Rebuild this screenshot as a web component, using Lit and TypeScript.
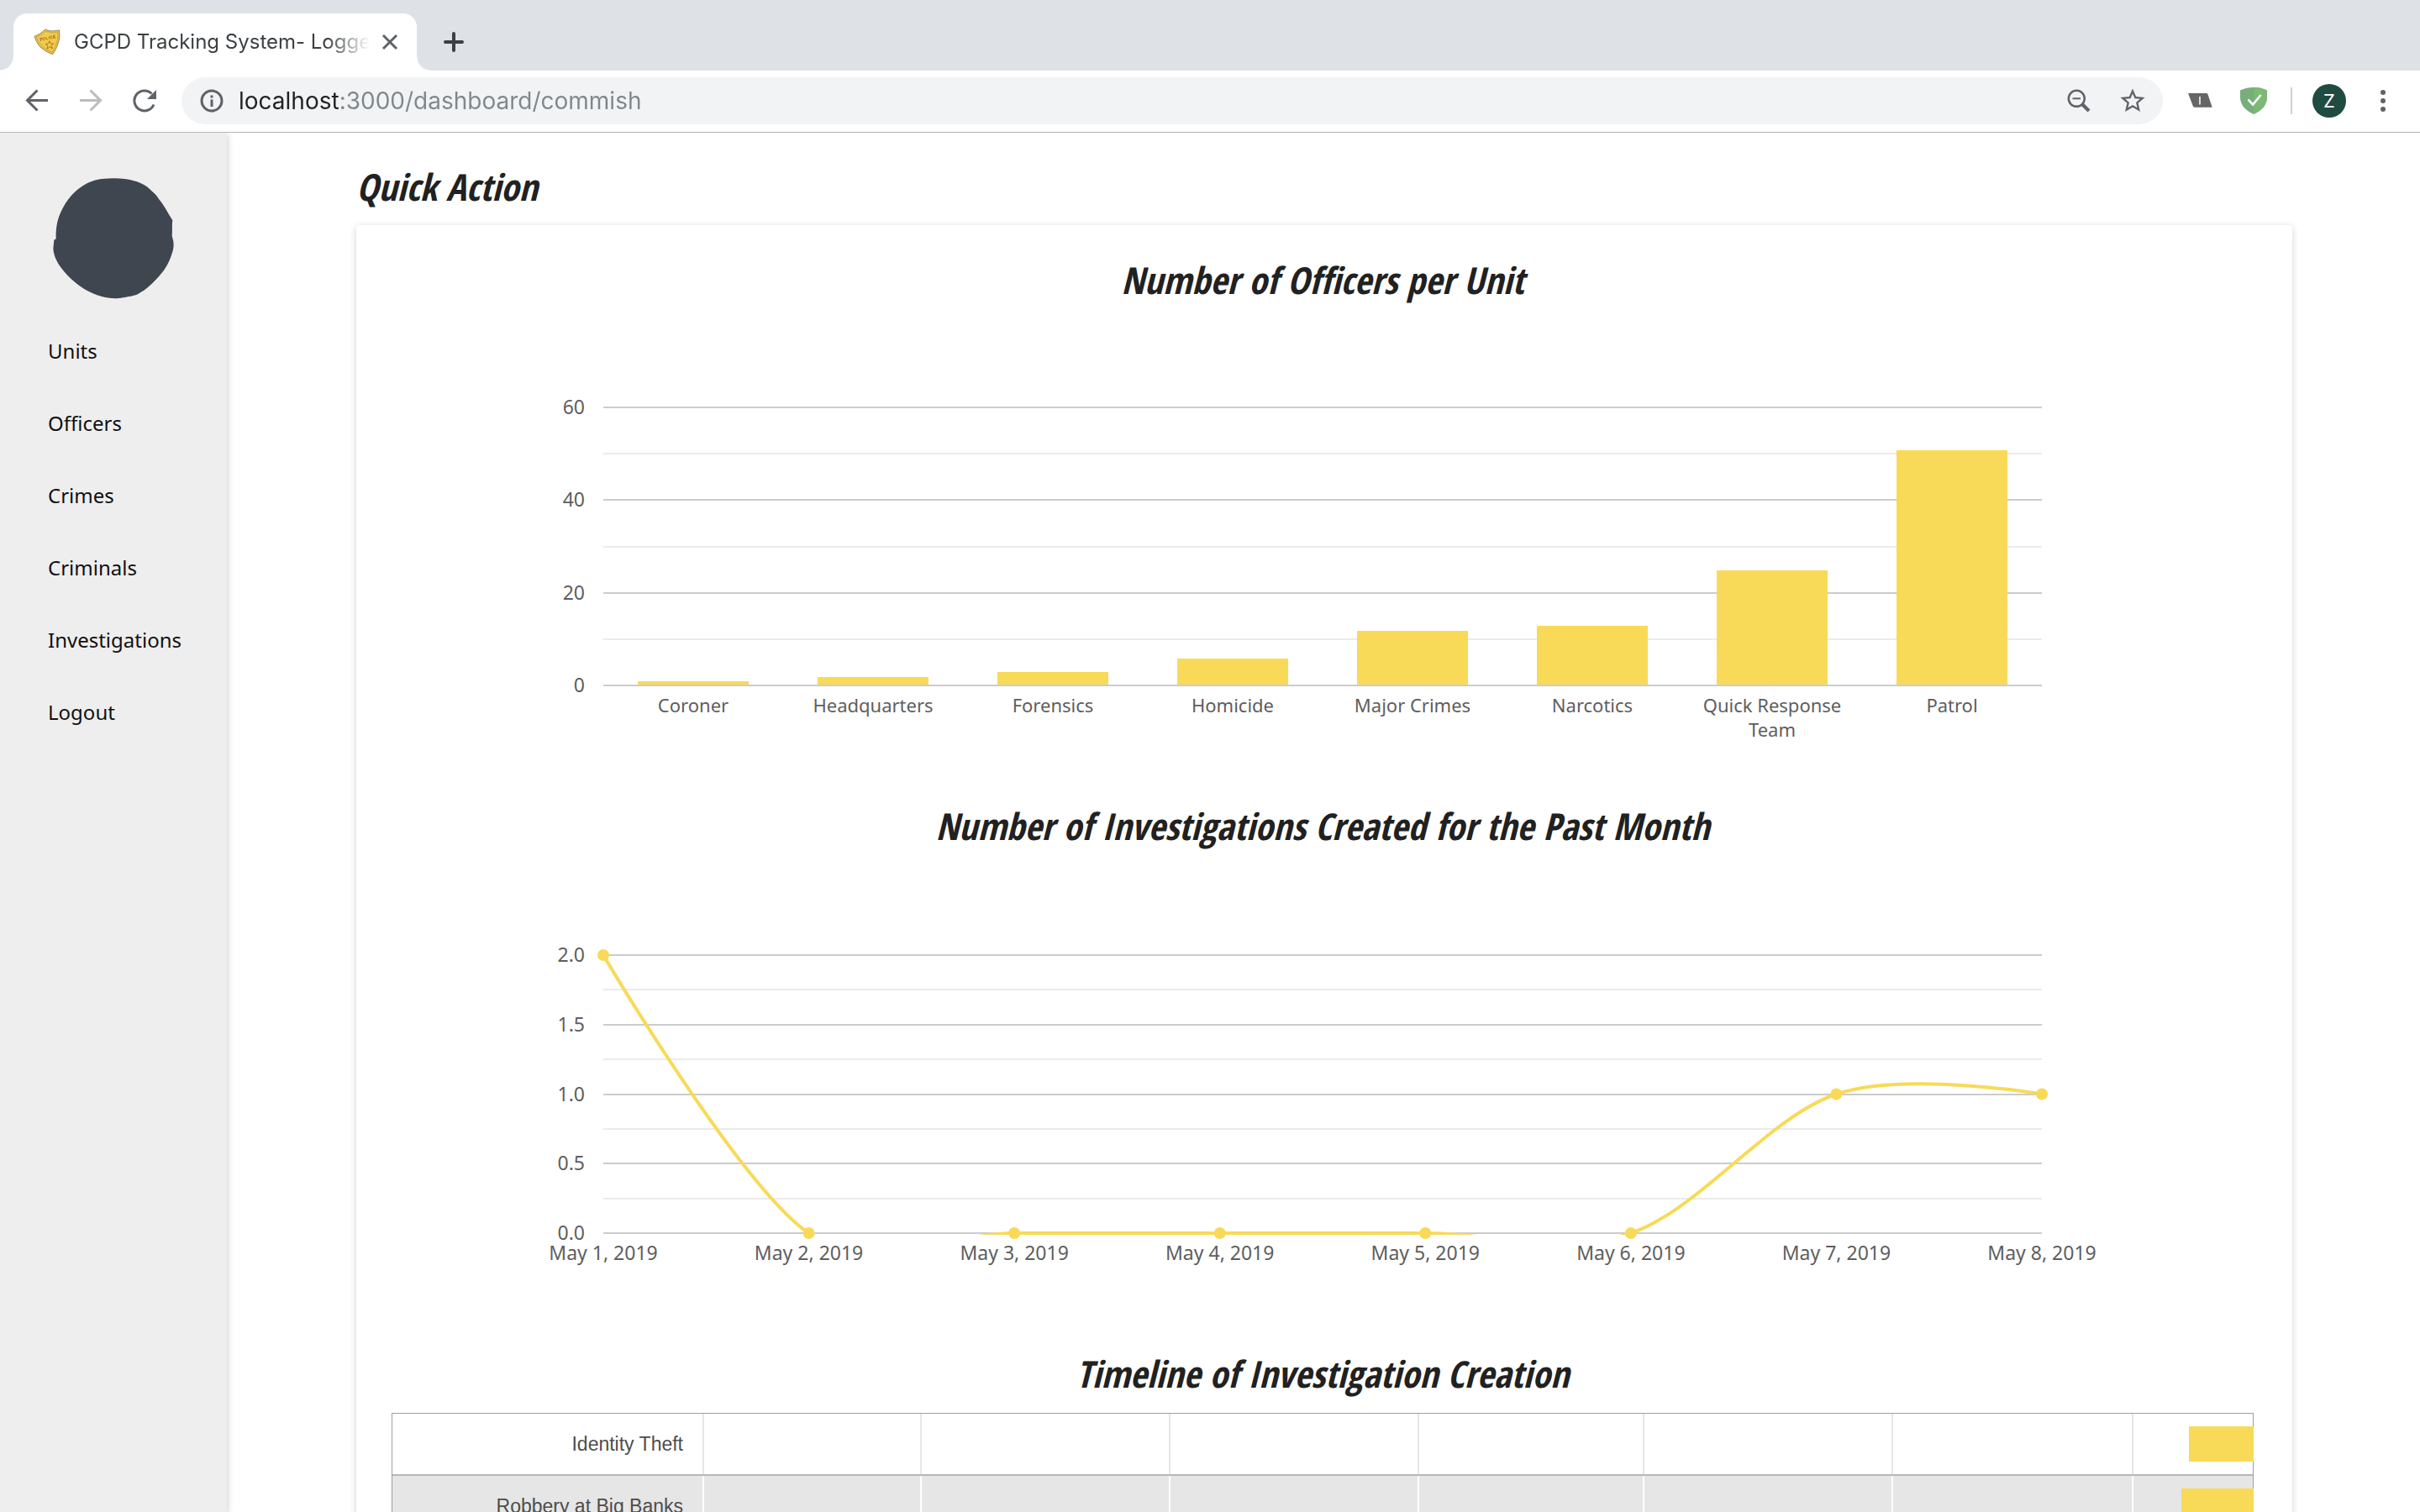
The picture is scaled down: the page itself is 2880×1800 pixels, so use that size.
import { LitElement, html, svg, css } from "lit";
import { customElement, property } from "lit/decorators.js";

const range = (n: number) => Array.from({ length: n }, (_, i) => i);

/* ---------- Browser frame ---------- */

@customElement("browser-bar")
export class BrowserBar extends LitElement {
  @property() tabTitle = "";
  @property() url = "";

  static styles = css`
    :host {
      display: block;
      font-family: Inter, "Liberation Sans", sans-serif;
    }
    button {
      border: 0;
      padding: 0;
      background: none;
      display: flex;
      align-items: center;
      justify-content: center;
      width: 32px;
      height: 32px;
      flex: none;
      color: #5f6368;
      font: inherit;
    }
    svg {
      display: block;
      width: 32px;
      height: 32px;
      fill: none;
      stroke: currentColor;
    }
    .tabs {
      display: flex;
      align-items: flex-end;
      height: 84px;
      padding-left: 16px;
      background: #dee1e6;
    }
    .tab {
      position: relative;
      box-sizing: border-box;
      display: flex;
      align-items: center;
      width: 480px;
      height: 68px;
      padding: 0 16px 0 24px;
      border-radius: 16px 16px 0 0;
      background: #fff;
    }
    .tab::before,
    .tab::after {
      content: "";
      position: absolute;
      bottom: 0;
      width: 16px;
      height: 16px;
    }
    .tab::before {
      left: -16px;
      background: radial-gradient(circle at 0 0, transparent 15px, #fff 16px);
    }
    .tab::after {
      right: -16px;
      background: radial-gradient(circle at 100% 0, transparent 15px, #fff 16px);
    }
    .tab-title {
      flex: 1;
      min-width: 0;
      margin: 0 4px 0 16px;
      white-space: nowrap;
      font-size: 24px;
      line-height: 32px;
      color: #3c4043;
      mask-image: linear-gradient(to left, transparent 4px, #000 56px);
    }
    .new-tab {
      margin: 0 0 18px 28px;
      color: #3c4043;
    }
    .toolbar {
      display: flex;
      align-items: center;
      padding: 8px 28px 9px;
      background: #fff;
      border-bottom: 1px solid #b4b5b6;
    }
    .nav {
      display: flex;
      gap: 32px;
      margin-right: 28px;
    }
    .forward {
      color: #babcbe;
    }
    .omnibox {
      flex: 1;
      display: flex;
      align-items: center;
      height: 56px;
      box-sizing: border-box;
      padding: 0 20px;
      border-radius: 28px;
      background: #f1f3f4;
    }
    .omnibox input {
      flex: 1;
      min-width: 0;
      height: 40px;
      margin: 0 16px;
      padding: 0;
      border: 0;
      outline: 0;
      font: 28px Inter, "Liberation Sans", sans-serif;
      color: #80868b;
      background: linear-gradient(to right, #202124 121px, #80868b 121px) text;
      -webkit-text-fill-color: transparent;
    }
    .star {
      margin-left: 32px;
    }
    .extensions {
      display: flex;
      gap: 32px;
      margin: 0 28px;
    }
    .divider {
      width: 2px;
      height: 32px;
      background: #cfd1d3;
    }
    .profile {
      width: 40px;
      height: 40px;
      margin: 0 28px 0 24px;
      border-radius: 50%;
      background: #1f4b40;
      color: #fff;
      font-size: 22px;
    }
  `;

  render() {
    return html`
      <div class="tabs">
        <div class="tab">
          <svg viewBox="118 70 100 100">
            <path d="M121 99 Q142 92 162 73 Q174 81 188 79 Q202 79 213 76 Q216 94 213 112 Q206 142 189 166 Q160 156 142 138 Q127 120 121 99Z" fill="#f3c94c" stroke="#8f7f55" stroke-width="3" />
            <path d="M128 102 Q146 96 162 80 Q186 88 208 83 Q210 100 207 112 Q201 138 187 158 Q162 149 147 134 Q134 119 128 102Z" stroke="#b39334" stroke-width="2" />
            <path d="M177 116 L181 126 L192 126 L184 133 L188 144 L178 138 L168 146 L171 134 L162 128 L173 126Z" stroke="#8f6f1e" stroke-width="2.500" />
            <path d="M145 117 L142 106 Q150 102 149 109 L144 111 M155 103 a4 5 0 1 0 1 0 M164 101 L166 111 L171 110 M175 99 L177 109 M187 99 Q179 96 180 104 Q183 110 189 105 M198 95 L191 96 L193 106 L200 104 M192 101 H198" stroke="#8f6f1e" stroke-width="2.500" />
          </svg>
          <span class="tab-title">${this.tabTitle}</span>
          <button aria-label="Close tab">
            <svg viewBox="0 0 32 32" stroke-width="3"><path d="M8 8 24 24 M24 8 8 24" /></svg>
          </button>
        </div>
        <button class="new-tab" aria-label="New tab">
          <svg viewBox="0 0 32 32" stroke-width="4" stroke-linecap="round"><path d="M16 6V26 M6 16H26" /></svg>
        </button>
      </div>
      <div class="toolbar">
        <div class="nav">
          <button aria-label="Back">
            <svg viewBox="0 0 32 32" stroke-width="3"><path d="M29 15.5H5 M16.5 3.5 4.5 15.5 16.5 27.5" /></svg>
          </button>
          <button class="forward" aria-label="Forward">
            <svg viewBox="0 0 32 32" stroke-width="3"><path d="M3 15.5H27 M15.5 3.5 27.5 15.5 15.5 27.5" /></svg>
          </button>
          <button aria-label="Reload">
            <svg viewBox="0 0 32 32" stroke-width="3">
              <path d="M27 20.5A12 12 0 1 1 24.5 7.5" />
              <path d="M30 3V14H19Z" fill="currentColor" stroke="none" />
            </svg>
          </button>
        </div>
        <div class="omnibox">
          <button aria-label="Site information">
            <svg viewBox="0 0 32 32" stroke-width="3">
              <circle cx="16" cy="16" r="12" />
              <path d="M16 14.5V23 M16 9.5V12.5" />
            </svg>
          </button>
          <input type="text" aria-label="Address" spellcheck="false" .value=${this.url} />
          <button aria-label="Zoom">
            <svg viewBox="0 0 32 32" stroke-width="2.5">
              <circle cx="13.3" cy="13.3" r="9.5" />
              <path d="M8.5 13.3H18" stroke-width="2" />
              <path d="M20 20 28 28" stroke-width="4" />
            </svg>
          </button>
          <button class="star" aria-label="Bookmark this page">
            <svg viewBox="1 1 22 22">
              <path stroke="none" fill="currentColor" d="M22 9.24l-7.19-.62L12 2 9.19 8.63 2 9.24l5.46 4.73L5.82 21 12 17.27 18.18 21l-1.63-7.03L22 9.24zM12 15.4l-3.76 2.27 1-4.28-3.32-2.88 4.38-.38L12 6.1l1.71 4.04 4.38.38-3.32 2.88 1 4.28L12 15.4z" />
            </svg>
          </button>
        </div>
        <div class="extensions">
          <button aria-label="Extension">
            <svg viewBox="0 0 32 32">
              <path d="M2 7H23.5Q25 7 25.5 8.3L30.7 23.7H9.8Q8.3 23.7 7.8 22.3Z" fill="#666" stroke="none" />
              <path d="M16 11V20.5" stroke="#dcdcdc" stroke-width="2" />
            </svg>
          </button>
          <button aria-label="Ad blocker">
            <svg viewBox="0 0 32 32">
              <path d="M16 0C21 0 27 1 32 3.5V12C32 21 25 28 16 32C7 28 0 21 0 12V3.5C5 1 11 0 16 0Z" fill="#77ae7b" stroke="none" />
              <path d="M16 0C21 0 27 1 32 3.5V12C32 21 25 28 16 32Z" fill="#7cb974" stroke="none" />
              <path d="M9.5 14.5 15 20.5 24.7 9" stroke="#fff" stroke-width="2.6" />
            </svg>
          </button>
        </div>
        <div class="divider"></div>
        <button class="profile" aria-label="Profile">Z</button>
        <button aria-label="Menu">
          <svg viewBox="0 0 32 32">
            ${[6, 16, 26].map((y) => svg`<circle cx="16" cy=${y} r="3" fill="currentColor" stroke="none" />`)}
          </svg>
        </button>
      </div>
    `;
  }
}

/* ---------- Charts ---------- */

const chartStyles = css`
  :host {
    display: block;
  }
  svg {
    display: block;
    width: 100%;
    height: auto;
  }
  text {
    font-family: "Noto Sans", "Open Sans", sans-serif;
    font-size: 22px;
    fill: #5e5e5e;
  }
  .tick,
  .date {
    font-size: 23px;
  }
  .tick {
    text-anchor: end;
  }
  .label,
  .date {
    text-anchor: middle;
  }
  .major {
    fill: #ccc;
  }
  .minor {
    fill: #ebebeb;
  }
  .mark {
    fill: #f8da58;
  }
  .curve {
    fill: none;
    stroke: #f8da58;
    stroke-width: 4;
  }
`;

const PLOT = { left: 252, width: 1712 };

const gridline = (y: number, kind: string) =>
  svg`<rect class=${kind} x=${PLOT.left} y=${Math.round(y) - 1} width=${PLOT.width} height="2" />`;

@customElement("bar-chart")
export class BarChart extends LitElement {
  @property({ attribute: false }) items: { name: string[]; count: number }[] = [];

  static styles = chartStyles;

  render() {
    const base = 453;
    const unit = 331 / 60;
    const slot = PLOT.width / this.items.length;
    const y = (v: number) => base - v * unit;
    return html`
      <svg viewBox="0 0 2216 590" role="img" aria-label="Number of officers per unit">
        ${[10, 30, 50].map((v) => gridline(y(v), "minor"))}
        ${[20, 40, 60].map((v) => gridline(y(v), "major"))}
        ${[0, 20, 40, 60].map(
          (v) => svg`<text class="tick" x="230" y=${Math.round(y(v)) + 8}>${v}</text>`
        )}
        ${this.items.map((d, i) => {
          const centre = PLOT.left + slot * (i + 0.5);
          const top = Math.round(y(d.count)) + 1;
          return svg`
            <rect class="mark" x=${Math.round(centre - 66)} y=${top} width="132" height=${base - top} />
            ${d.name.map((line, n) => svg`<text class="label" x=${centre} y=${485 + n * 29}>${line}</text>`)}
          `;
        })}
        ${gridline(base, "major")}
      </svg>
    `;
  }
}

@customElement("line-chart")
export class LineChart extends LitElement {
  @property({ attribute: false }) items: { date: string; count: number }[] = [];

  static styles = chartStyles;

  render() {
    const base = 455;
    const unit = 331 / 2;
    const y = (v: number) => base - v * unit;
    const step = PLOT.width / Math.max(1, this.items.length - 1);
    const pts = this.items.map((d, i) => [PLOT.left + i * step, y(d.count)]);
    const last = pts.length - 1;
    const slope = (i: number) =>
      i === 0 || i === last
        ? [0, 0]
        : [(pts[i + 1][0] - pts[i - 1][0]) / 6, (pts[i + 1][1] - pts[i - 1][1]) / 6];
    const path = pts
      .map((p, i) => {
        if (i === 0) return `M${p[0]} ${p[1]}`;
        const a = pts[i - 1];
        const sa = slope(i - 1);
        const sp = slope(i);
        return `C${a[0] + sa[0]} ${a[1] + sa[1]} ${p[0] - sp[0]} ${p[1] - sp[1]} ${p[0]} ${p[1]}`;
      })
      .join("");
    return html`
      <svg viewBox="0 0 2216 592" role="img" aria-label="Number of investigations created for the past month">
        <defs>
          <clipPath id="plot"><rect x=${PLOT.left} y="110" width=${PLOT.width} height="347" /></clipPath>
        </defs>
        ${[0.25, 0.75, 1.25, 1.75].map((v) => gridline(y(v), "minor"))}
        ${[0, 0.5, 1, 1.5, 2].map(
          (v) => svg`
            ${gridline(y(v), "major")}
            <text class="tick" x="230" y=${Math.round(y(v)) + 8}>${v.toFixed(1)}</text>
          `
        )}
        <path class="curve" clip-path="url(#plot)" d=${path} />
        ${pts.map((p) => svg`<circle class="mark" cx=${p[0]} cy=${p[1]} r="7" />`)}
        ${this.items.map((d, i) => svg`<text class="date" x=${pts[i][0]} y="487">${d.date}</text>`)}
      </svg>
    `;
  }
}

@customElement("timeline-chart")
export class TimelineChart extends LitElement {
  @property({ attribute: false }) rows: { name: string; start: number }[] = [];

  static styles = [
    chartStyles,
    css`
      .row-label {
        font-family: "Liberation Sans", Arial, sans-serif;
        font-size: 23px;
        fill: #4d4d4d;
        text-anchor: end;
      }
      .band {
        fill: #e6e6e6;
      }
      .column {
        fill: #e6e6e6;
      }
      .column.on-band {
        fill: #fff;
      }
      .rule {
        fill: #b7b7b7;
      }
      .frame {
        fill: none;
        stroke: #9e9e9e;
        stroke-width: 1;
        shape-rendering: crispEdges;
      }
    `,
  ];

  render() {
    const top = 17;
    const pitch = 74;
    const right = 2216;
    const columns = [370, 629, 925, 1221, 1489, 1785, 2071];
    const bottom = top + pitch * this.rows.length;
    return html`
      <svg viewBox="0 0 2216 ${bottom + 20}" role="img" aria-label="Timeline of investigation creation">
        ${this.rows.map((row, i) => {
          const y = top + i * pitch;
          const odd = i % 2 === 1;
          return svg`
            ${odd ? svg`<rect class="band" x="0" y=${y} width=${right} height=${pitch} />` : ""}
            ${columns.map(
              (x) => svg`<rect class=${odd ? "column on-band" : "column"} x=${x} y=${y} width="2" height=${pitch} />`
            )}
            ${i > 0 ? svg`<rect class="rule" x="0" y=${y - 1} width=${right} height="2" />` : ""}
            <text class="row-label" x="347" y=${y + 45}>${row.name}</text>
          `;
        })}
        <rect class="frame" x="0.5" y=${top + 0.5} width=${right - 1} height=${bottom - top - 1} />
        ${this.rows.map(
          (row, i) =>
            svg`<rect class="mark" x=${row.start} y=${top + i * pitch + 16} width=${right - row.start} height="42" />`
        )}
      </svg>
    `;
  }
}

/* ---------- Page ---------- */

@customElement("app-root")
export class AppRoot extends LitElement {
  private links = ["Units", "Officers", "Crimes", "Criminals", "Investigations", "Logout"];

  private units = [
    { name: ["Coroner"], count: 1 },
    { name: ["Headquarters"], count: 2 },
    { name: ["Forensics"], count: 3 },
    { name: ["Homicide"], count: 6 },
    { name: ["Major Crimes"], count: 12 },
    { name: ["Narcotics"], count: 13 },
    { name: ["Quick Response", "Team"], count: 25 },
    { name: ["Patrol"], count: 51 },
  ];

  private days = range(8).map((i) => ({
    date: `May ${i + 1}, 2019`,
    count: [2, 0, 0, 0, 0, 0, 1, 1][i],
  }));

  private timeline = [
    { name: "Identity Theft", start: 2139 },
    { name: "Robbery at Big Banks", start: 2130 },
  ];

  static styles = css`
    :host {
      display: flex;
      flex-direction: column;
      height: 100vh;
      overflow: hidden;
      background: #fff;
      color: #212121;
    }
    browser-bar {
      flex: none;
    }
    .page {
      flex: 1;
      min-height: 0;
      display: flex;
      overflow: hidden;
    }
    .sidebar {
      flex: none;
      box-sizing: border-box;
      width: 270px;
      padding-top: 54px;
      background: #eee;
      box-shadow: 0 2px 8px rgba(0, 0, 0, 0.24);
    }
    .emblem {
      display: block;
      width: 144px;
      height: 144px;
      margin: 0 auto 19px;
    }
    .sidebar a {
      display: block;
      padding-left: 57px;
      font: 24px "Noto Sans", "Open Sans", sans-serif;
      line-height: 86px;
      color: #111;
      text-decoration: none;
    }
    .content {
      flex: 1;
      min-width: 0;
      padding: 34px 152px 0 154px;
    }
    h1,
    h2 {
      margin: 0;
      font: italic 700 44px "Open Sans Condensed", "Roboto Condensed", sans-serif;
      line-height: 60px;
    }
    h1 {
      margin-bottom: 16px;
    }
    h2 {
      text-align: center;
    }
    .card {
      padding: 35px 46px 35px 42px;
      border-radius: 4px;
      background: #fff;
      box-shadow: 0 2px 8px rgba(0, 0, 0, 0.18);
    }
  `;

  render() {
    return html`
      <browser-bar tabTitle="GCPD Tracking System- Logge" url="localhost:3000/dashboard/commish"></browser-bar>
      <div class="page">
        <nav class="sidebar">
          <svg class="emblem" viewBox="42 36 432 432" aria-hidden="true">
            <path
              fill="#3f464f"
              d="M265 37C312 37 350 48 378 67C396 84 408 92 418 108C436 130 446 148 456 166L469 187C466 205 469 225 467 242L472 262C474 280 472 292 466 308C456 340 440 368 410 398C390 418 376 432 360 441L342 452L320 458C300 460 285 466 262 466C215 464 180 448 150 430C118 408 92 386 68 352C50 325 44 305 43 287L46 257L53 253C51 205 62 170 78 142C100 100 130 72 165 54C200 38 230 37 265 37Z"
            />
          </svg>
          ${this.links.map((name) => html`<a href="#${name.toLowerCase()}">${name}</a>`)}
        </nav>
        <main class="content">
          <h1>Quick Action</h1>
          <section class="card">
            <h2>Number of Officers per Unit</h2>
            <bar-chart .items=${this.units}></bar-chart>
            <h2>Number of Investigations Created for the Past Month</h2>
            <line-chart .items=${this.days}></line-chart>
            <h2>Timeline of Investigation Creation</h2>
            <timeline-chart .rows=${this.timeline}></timeline-chart>
          </section>
        </main>
      </div>
    `;
  }
}
